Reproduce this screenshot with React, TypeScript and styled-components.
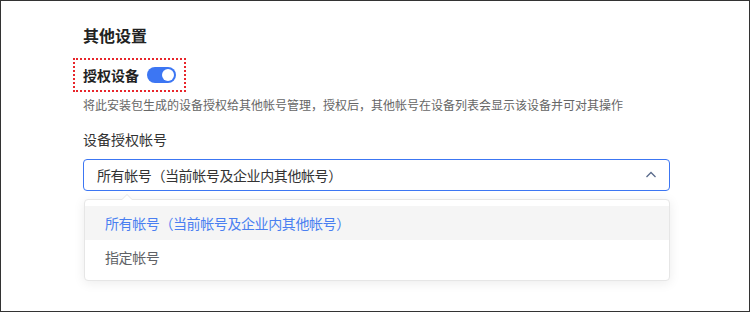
import React, { useState } from 'react'
import styled, { createGlobalStyle } from 'styled-components'

const GlobalStyle = createGlobalStyle`
  html, body {
    margin: 0;
    padding: 0;
    background: #fff;
  }
  * {
    box-sizing: border-box;
  }
`

const Frame = styled.div`
  width: 750px;
  height: 312px;
  border: 1px solid #333;
  background: #fff;
  padding: 22px 79px 0 82px;
  font-family: "Noto Sans CJK SC", "Noto Sans", sans-serif;
  color: #333;
  overflow: hidden;
`

const Title = styled.h3`
  margin: 0;
  font-size: 16px;
  line-height: 24px;
  font-weight: 700;
  color: #222;
`

const SwitchRow = styled.div`
  display: inline-flex;
  align-items: center;
  gap: 8px;
  height: 32px;
  margin: 12px 0 0 -9px;
  padding: 0 9px 0 9px;
  outline: 2px dotted #e8262b;
  outline-offset: -1px;
`

const SwitchLabel = styled.span`
  font-size: 14px;
  font-weight: 700;
  color: #222;
`

const Toggle = styled.button<{ $on: boolean }>`
  position: relative;
  width: 29px;
  height: 16px;
  border: 0;
  padding: 0;
  border-radius: 8px;
  background: ${p => (p.$on ? '#3c76f3' : '#c0c4cc')};
  cursor: pointer;

  &::after {
    content: '';
    position: absolute;
    top: 2px;
    left: ${p => (p.$on ? '15px' : '2px')};
    width: 12px;
    height: 12px;
    border-radius: 50%;
    background: #fff;
  }
`

const Desc = styled.p`
  margin: 5px 0 0;
  font-size: 12px;
  line-height: 18px;
  color: #666;
`

const FieldLabel = styled.div`
  margin-top: 15px;
  font-size: 14px;
  line-height: 20px;
  color: #333;
`

const SelectWrap = styled.div`
  position: relative;
  margin-top: 10px;
  width: 587px;
`

const SelectBox = styled.div`
  display: flex;
  align-items: center;
  justify-content: space-between;
  height: 32px;
  padding: 0 12px 0 13px;
  border: 1px solid #3c76f3;
  border-radius: 4px;
  font-size: 14px;
  letter-spacing: -0.4px;
  color: #333;
  background: #fff;
`

const Menu = styled.ul`
  position: absolute;
  top: 40px;
  left: 1px;
  right: 0;
  margin: 0;
  padding: 6px 0;
  list-style: none;
  background: #fff;
  border: 1px solid #e6e6e6;
  border-radius: 4px;
  box-shadow: 0 2px 12px rgba(0, 0, 0, 0.08);

  &::before {
    content: '';
    position: absolute;
    top: -6px;
    left: 36px;
    width: 0;
    height: 0;
    border-left: 6px solid transparent;
    border-right: 6px solid transparent;
    border-bottom: 6px solid #e6e6e6;
  }
  &::after {
    content: '';
    position: absolute;
    top: -5px;
    left: 37px;
    width: 0;
    height: 0;
    border-left: 5px solid transparent;
    border-right: 5px solid transparent;
    border-bottom: 5px solid #fff;
  }
`

const Option = styled.li<{ $active?: boolean }>`
  height: 34px;
  line-height: 34px;
  padding-left: 20px;
  font-size: 14px;
  letter-spacing: -0.4px;
  color: ${p => (p.$active ? '#4a7ff1' : '#606266')};
  background: ${p => (p.$active ? '#f5f5f5' : 'transparent')};
`

const options = ['所有帐号（当前帐号及企业内其他帐号）', '指定帐号']

export default function App() {
  const [on, setOn] = useState(true)
  const [selected] = useState(0)

  return (
    <>
      <GlobalStyle />
      <Frame>
        <Title>其他设置</Title>
        <SwitchRow>
          <SwitchLabel>授权设备</SwitchLabel>
          <Toggle $on={on} onClick={() => setOn(!on)} aria-label="授权设备" />
        </SwitchRow>
        <Desc>将此安装包生成的设备授权给其他帐号管理，授权后，其他帐号在设备列表会显示该设备并可对其操作</Desc>
        <FieldLabel>设备授权帐号</FieldLabel>
        <SelectWrap>
          <SelectBox>
            <span>{options[selected]}</span>
            <svg width="12" height="12" viewBox="0 0 12 12" fill="none">
              <path d="M1.5 8L6 3.5L10.5 8" stroke="#5a6b8c" strokeWidth="1.3" />
            </svg>
          </SelectBox>
          <Menu>
            {options.map((o, i) => (
              <Option key={o} $active={i === selected}>
                {o}
              </Option>
            ))}
          </Menu>
        </SelectWrap>
      </Frame>
    </>
  )
}
